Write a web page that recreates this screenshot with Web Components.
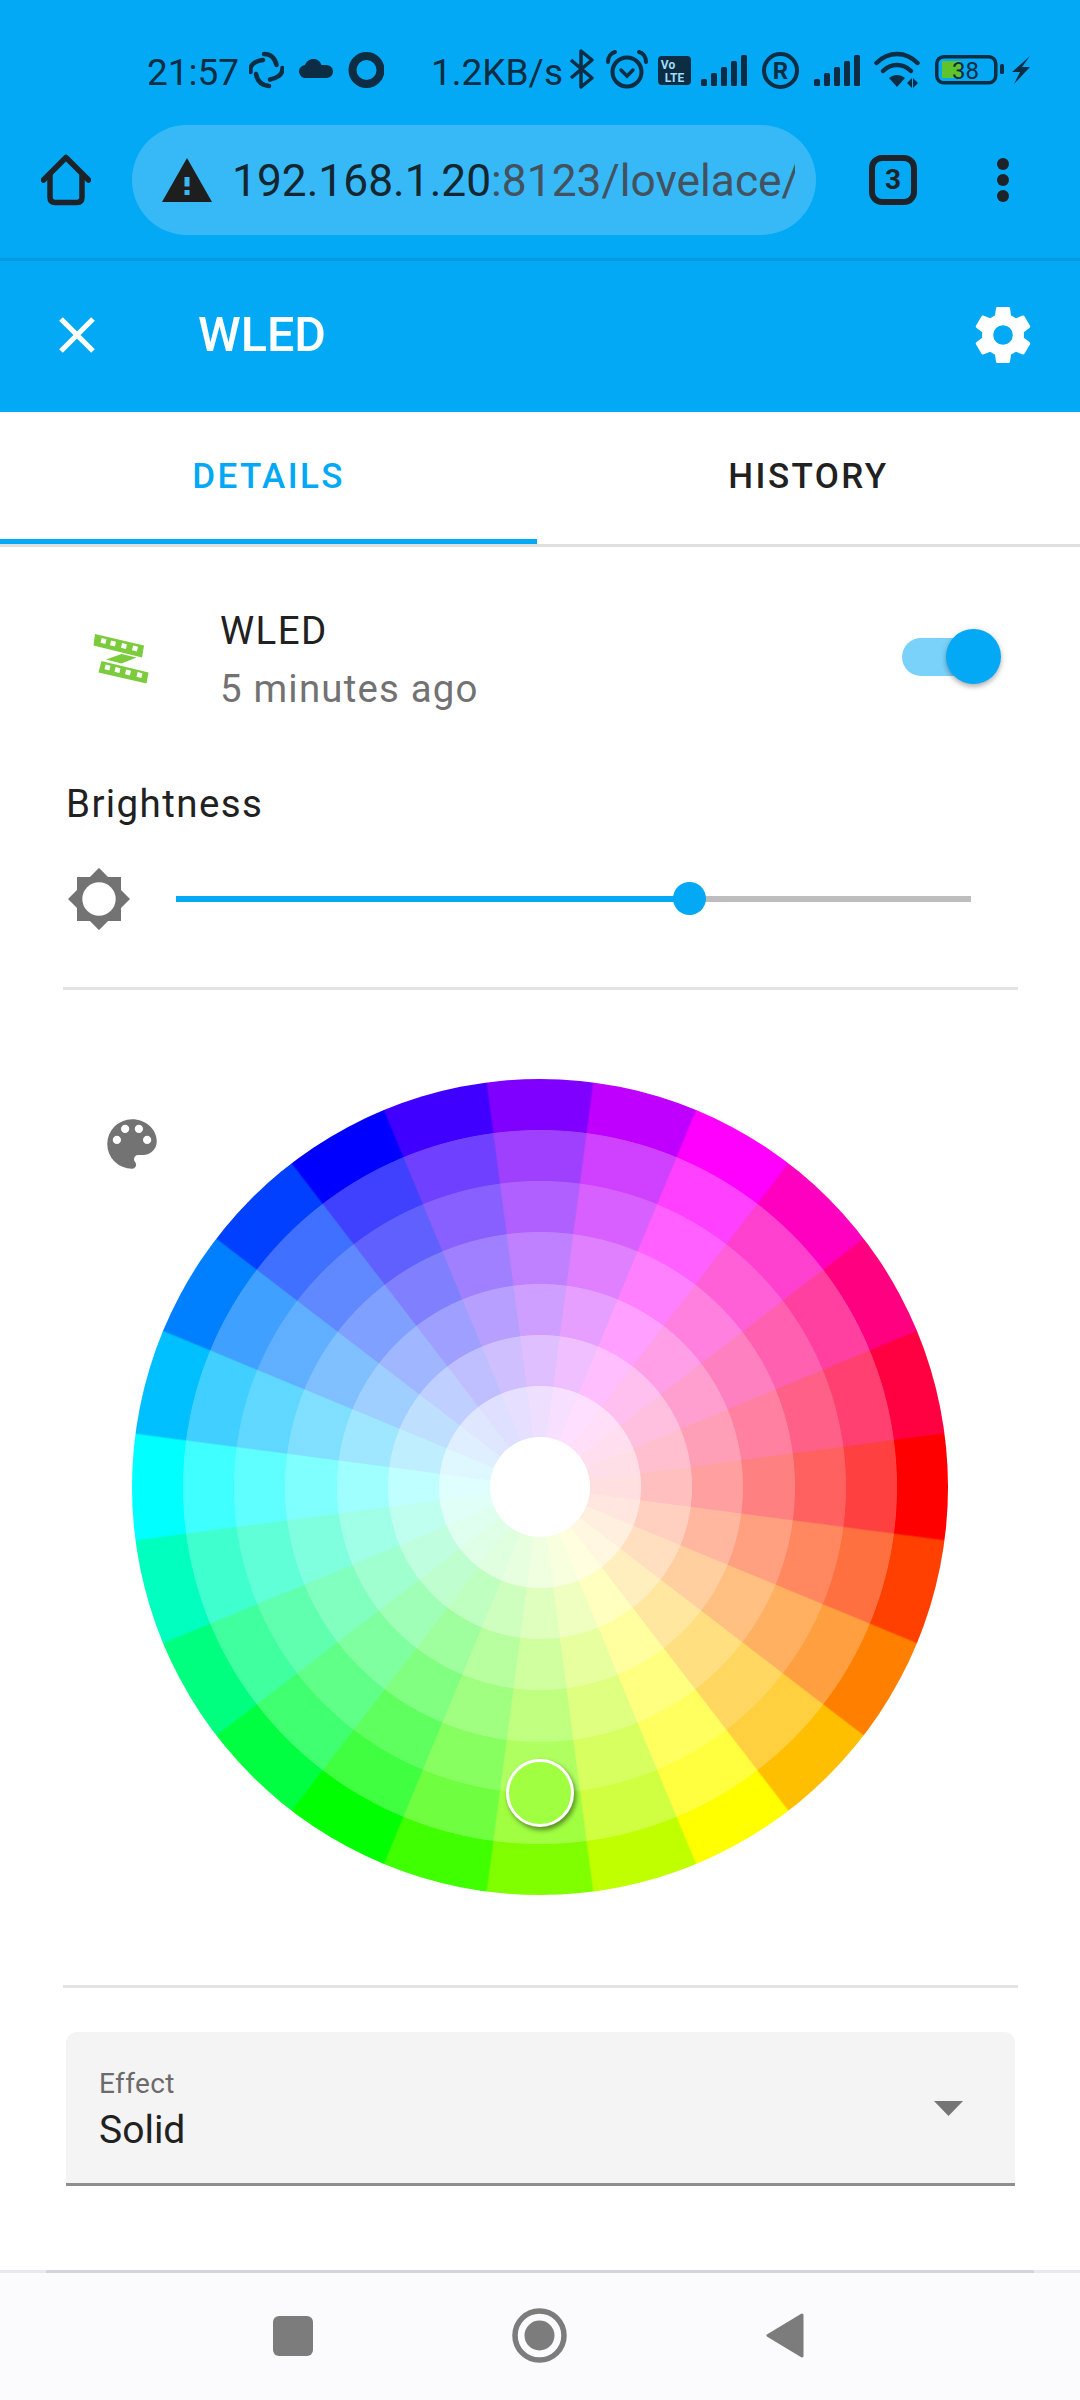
<!DOCTYPE html>
<html lang="en">
<head>
<meta charset="utf-8">
<title>WLED</title>
<style>
html,body{margin:0;padding:0;background:#fff}
body{width:1080px;height:2400px;overflow:hidden;font-family:Roboto,"Liberation Sans",sans-serif;color:#212121;display:flex;flex-direction:column}
</style>
</head>
<body>
<status-bar></status-bar>
<browser-bar></browser-bar>
<app-header>WLED</app-header>
<tab-bar><span slot="active">DETAILS</span><span slot="other">HISTORY</span></tab-bar>
<info-row><span slot="name">WLED</span><span slot="sub">5 minutes ago</span></info-row>
<brightness-row>Brightness</brightness-row>
<line-divider></line-divider>
<color-wheel></color-wheel>
<line-divider></line-divider>
<effect-select><span slot="label">Effect</span><span slot="value">Solid</span></effect-select>
<nav-bar></nav-bar>

<script>
function define(name, html) {
  customElements.define(name, class extends HTMLElement {
    constructor() {
      super();
      this.attachShadow({mode: 'open'}).innerHTML = typeof html === 'function' ? html() : html;
    }
  });
}
const D = '#0c2d44';
const ico = (x, w, body) => `<svg width="${w}" height="60" viewBox="${x} 40 ${w} 60" style="flex:none;display:block;margin-left:var(--m,0)">${body}</svg>`;
const sig = x => [0,1,2,3,4].map(i => {
  const h = 7 + i * 6;
  return `<rect x="${x + 1 + i * 10}" y="${86 - h}" width="6" height="${h}" rx="1.5" fill="${D}"/>`;
}).join('');

define('status-bar', () => `
<style>
:host{display:flex;flex:none;height:110px;box-sizing:border-box;padding:40px 0 10px 147px;background:#03a9f4;color:${D};font-size:37px;align-items:flex-start}
span{flex:none;display:flex}
.t{display:block;height:60px;line-height:65px;white-space:nowrap}
</style>
<span class="t" style="width:93px">21:57</span>
<span style="--m:9px">${ico(249,35,`<g fill="none" stroke="${D}" stroke-width="4.500" stroke-linecap="round"><path d="M264 54Q274 54 276.500 65"/><path d="M282.500 68Q283 77 270 79.500"/><path d="M269 86Q258 85 256 74"/><path d="M250.500 72Q249 62 263 60"/></g>`)}</span>
<span style="--m:15px">${ico(299,35,`<path d="M306 78a6.500 6.500 0 0 1-1-13c1.500-4 5-6.500 9-6 3.500 0 6 2.500 7.500 6h4.500a6.500 6.500 0 0 1 1 13z" fill="${D}"/>`)}</span>
<span style="--m:14px">${ico(348,36,`<circle cx="366.500" cy="70" r="14" fill="none" stroke="${D}" stroke-width="8"/>`)}</span>
<span class="t" style="margin-left:47px;width:138px">1.2KB/s</span>
<span>${ico(569,25,`<path d="M571 60 592 78 581 87V51L592 60 571 78" fill="none" stroke="${D}" stroke-width="3.500" stroke-linejoin="round"/>`)}</span>
<span style="--m:12px">${ico(606,42,`<g fill="none" stroke="${D}" stroke-width="4" stroke-linecap="round"><circle cx="627" cy="72" r="14.500"/><path d="M621 70l6 6 6-6" stroke-width="3.500"/><path d="M608 62c0-5 3-9 7-10M646 62c0-5-3-9-7-10"/></g>`)}</span>
<span style="--m:9px">${ico(657,35,`<rect x="658" y="56" width="33" height="29" rx="4" fill="${D}"/><text x="668" y="69" font-size="12" font-weight="700" fill="#9fdcf8" font-family="Roboto" text-anchor="middle">Vo</text><text x="674.500" y="82" font-size="12" font-weight="700" fill="#9fdcf8" font-family="Roboto" text-anchor="middle">LTE</text>`)}</span>
<span style="--m:8px">${ico(700,48,sig(700))}</span>
<span style="--m:14px">${ico(762,37,`<circle cx="780.500" cy="70.500" r="16.500" fill="none" stroke="${D}" stroke-width="4"/><text x="780.500" y="79" font-size="24" font-weight="700" fill="${D}" font-family="Roboto" text-anchor="middle">R</text>`)}</span>
<span style="--m:14px">${ico(813,48,sig(813))}</span>
<span style="--m:13px">${ico(874,46,`<g fill="none" stroke="${D}" stroke-width="4.500" stroke-linecap="round"><path d="M876.500 63c12-12 29-12 41 0"/><path d="M883 71c8-8 20-8 28 0"/></g><path d="M889 78c5-4 11-4 16 0l-8 9z" fill="${D}"/><path d="M907 83l5-5v10zM913 78l5 5-5 5z" fill="${D}"/>`)}</span>
<span style="--m:15px">${ico(935,70,`<rect x="942" y="61" width="19" height="17" fill="#5fc42c"/><rect x="936.750" y="56.750" width="59" height="26" rx="7" fill="none" stroke="${D}" stroke-width="3.500"/><rect x="1000" y="64" width="4" height="10" rx="1.500" fill="${D}"/><text x="965.500" y="79" font-size="24" fill="${D}" font-family="Roboto" text-anchor="middle">38</text>`)}</span>
<span style="--m:6px">${ico(1011,19,`<path d="M1030 56 1012 72H1020L1014 84 1030 67H1022Z" fill="${D}"/>`)}</span>
`);

define('browser-bar', `
<style>
:host{display:flex;flex:none;height:151px;box-sizing:border-box;padding:0 0 9px 0;background:#03a9f4;border-bottom:3px solid #0299de;align-items:center}
svg{flex:none;display:block}
.pill{flex:none;width:684px;height:110px;border-radius:55px;background:#38b9f7;margin-left:41px;display:flex;align-items:center;box-sizing:border-box;padding:0 21px 0 30px}
.url{margin-left:20px;width:563px;overflow:hidden;white-space:nowrap;font-size:44.300px;line-height:60px;padding-top:2px;color:#43525e}
.url b{font-weight:400;color:#14262f}
.tabs{flex:none;margin-left:53px;width:48px;height:50px;box-sizing:border-box;border:6px solid #1d2328;border-radius:13px;display:flex;align-items:center;justify-content:center;font-size:28px;font-weight:700;color:#1d2328}
.more{flex:none;margin-left:80px}
</style>
<svg style="margin-left:41px" width="50" height="52" viewBox="41 155 50 52"><g fill="none" stroke="#1d2328" stroke-width="5.500" stroke-linecap="round" stroke-linejoin="round"><path d="M43.500 181 66 158.500 88.500 181"/><path d="M50 175V198Q50 203.500 55 203.500H77Q82 203.500 82 198V175"/></g></svg>
<div class="pill">
  <svg width="50" height="44" viewBox="162 156 50 44"><path d="M187 156 212 200H162Z" fill="#1e1e1e"/><rect x="184.500" y="175" width="5" height="9.500" fill="#38b9f7"/><rect x="184.500" y="188" width="5" height="5" fill="#38b9f7"/></svg>
  <div class="url"><b>192.168.1.20</b>:8123/lovelace/</div>
</div>
<div class="tabs">3</div>
<svg class="more" width="12" height="44" viewBox="0 0 12 44"><circle cx="6" cy="6" r="6" fill="#1d2328"/><circle cx="6" cy="22" r="6" fill="#1d2328"/><circle cx="6" cy="38" r="6" fill="#1d2328"/></svg>
`);

define('app-header', `
<style>
:host{display:flex;flex:none;height:151px;box-sizing:border-box;padding:0 0 3px 0;background:#03a9f4;color:#fff;align-items:center}
svg{flex:none;display:block}
.t{flex:1;margin-left:102px;font-size:48.500px;font-weight:500;line-height:60px}
</style>
<svg style="margin-left:58px" width="38" height="38" viewBox="0 0 38 38"><path d="M3 3 35 35M35 3 3 35" stroke="#fff" stroke-width="5.200" fill="none"/></svg>
<div class="t"><slot></slot></div>
<svg style="margin-right:49px" width="56" height="56" viewBox="2 2 20 20"><path fill="#fff" d="M12,15.500A3.500,3.500 0 0,1 8.500,12A3.500,3.500 0 0,1 12,8.500A3.500,3.500 0 0,1 15.500,12A3.500,3.500 0 0,1 12,15.500M19.430,12.970C19.470,12.650 19.500,12.330 19.500,12C19.500,11.670 19.470,11.340 19.430,11L21.540,9.370C21.730,9.220 21.780,8.950 21.660,8.730L19.660,5.270C19.540,5.050 19.270,4.960 19.050,5.050L16.560,6.050C16.040,5.660 15.500,5.320 14.870,5.070L14.500,2.420C14.460,2.180 14.250,2 14,2H10C9.750,2 9.540,2.180 9.500,2.420L9.130,5.070C8.500,5.320 7.960,5.660 7.440,6.050L4.950,5.050C4.730,4.960 4.460,5.050 4.340,5.270L2.340,8.730C2.210,8.950 2.270,9.220 2.460,9.370L4.570,11C4.530,11.340 4.500,11.670 4.500,12C4.500,12.330 4.530,12.650 4.570,12.970L2.460,14.630C2.270,14.780 2.210,15.050 2.340,15.270L4.340,18.730C4.460,18.950 4.730,19.030 4.950,18.950L7.440,17.940C7.960,18.340 8.500,18.680 9.130,18.930L9.500,21.580C9.540,21.820 9.750,22 10,22H14C14.250,22 14.460,21.820 14.500,21.580L14.870,18.930C15.500,18.670 16.040,18.340 16.560,17.940L19.050,18.950C19.270,19.030 19.540,18.950 19.660,18.730L21.660,15.270C21.780,15.050 21.730,14.780 21.540,14.630L19.430,12.970Z"/></svg>
`);

define('tab-bar', `
<style>
:host{display:grid;flex:none;grid-template-columns:537px 1fr;height:135px;box-sizing:border-box;background:#fff;border-bottom:3px solid #e0e0e0;font-size:35px;font-weight:500;letter-spacing:2.400px;text-align:center}
div{display:flex;align-items:center;justify-content:center;box-sizing:border-box;height:132px;padding-top:2px;padding-bottom:6px}
.a{color:#03a9f4;border-bottom:5px solid #03a9f4;padding-bottom:1px}
.o{color:#212121}
</style>
<div class="a"><slot name="active"></slot></div>
<div class="o"><slot name="other"></slot></div>
`);

define('info-row', `
<style>
:host{display:flex;flex:none;box-sizing:border-box;height:221px;padding:58px 79px 57px 90px;align-items:center;background:#fff}
svg{flex:none;display:block}
.txt{flex:1;margin-left:70px;display:flex;flex-direction:column;padding-top:3px}
.n{font-size:38.500px;line-height:48px;height:48px;letter-spacing:1.400px;color:#212121}
.s{font-size:38.400px;line-height:48px;height:58px;padding-top:10px;box-sizing:border-box;letter-spacing:1.200px;color:#727272}
.toggle{flex:none;position:relative;width:99px;height:55px;margin-top:-3px}
.track{width:96px;height:38px;margin-top:9px;border-radius:19px;background:#7ad2fb}
.knob{position:absolute;right:0;top:0;width:55px;height:55px;border-radius:50%;background:#03a9f4;box-shadow:0 3px 4px rgba(0,0,0,.22),0 1px 8px rgba(0,0,0,.12)}
</style>
<svg width="60" height="60" viewBox="90 628 60 60">
  <g fill="#7ccb3c">
    <path d="M95 634 144 645.500 142 657.500 93.500 645.500Z"/>
    <path d="M101.500 661 148.500 672.500 146.500 683.500 98.500 672.500Z"/>
    <path d="M106 659.500 121.500 654 136.500 657.500 121.500 663.500Z"/>
  </g>
  <g fill="#fff">
    <rect x="101" y="638.500" width="5" height="5" transform="rotate(13 103.500 641)"/>
    <rect x="110.500" y="641" width="5" height="5" transform="rotate(13 113 643.500)"/>
    <rect x="121.500" y="643.500" width="5" height="5" transform="rotate(13 124 646)"/>
    <rect x="132.500" y="646" width="5" height="5" transform="rotate(13 135 648.500)"/>
    <rect x="105" y="665" width="5" height="5" transform="rotate(13 107.500 667.500)"/>
    <rect x="115" y="667.500" width="5" height="5" transform="rotate(13 117.500 670)"/>
    <rect x="125.500" y="670" width="5" height="5" transform="rotate(13 128 672.500)"/>
    <rect x="137" y="672.500" width="5" height="5" transform="rotate(13 139.500 675)"/>
  </g>
</svg>
<div class="txt"><div class="n"><slot name="name"></slot></div><div class="s"><slot name="sub"></slot></div></div>
<div class="toggle"><div class="track"></div><div class="knob"></div></div>
`);

define('brightness-row', `
<style>
:host{display:block;flex:none;height:219px;box-sizing:border-box;background:#fff;padding:12px 0 0 66px}
.l{font-size:38.500px;line-height:48px;letter-spacing:1.400px;color:#212121}
.r{display:flex;align-items:center;height:64px;margin-top:39px}
svg{flex:none;display:block;margin-left:2px}
.slider{flex:none;position:relative;margin-left:46px;width:795px;height:6px;background:#bdbdbd}
.fill{width:514px;height:6px;background:#03a9f4}
.th{position:absolute;left:497px;top:-14px;width:33px;height:33px;border-radius:50%;background:#03a9f4}
</style>
<div class="l"><slot></slot></div>
<div class="r">
  <svg width="62" height="62" viewBox="0 0 62 62"><g fill="#737373"><rect x="9" y="9" width="44" height="44"/><rect x="9" y="9" width="44" height="44" transform="rotate(45 31 31)"/></g><circle cx="31" cy="31" r="16.700" fill="#fff"/></svg>
  <div class="slider"><div class="fill"></div><div class="th"></div></div>
</div>
`);

define('line-divider', `
<style>:host{display:block;flex:none;height:3px;margin:0 62px 0 63px;background:#e3e3e3}</style>
`);

define('color-wheel', () => {
  const stops = [];
  for (let i = 0; i < 24; i++) {
    const h = i * 15, c = `hsl(${h},100%,50%)`;
    stops.push(`${c} ${i * 15 + .15}deg ${(i + 1) * 15 - .15}deg`);
  }
  stops.push(`hsl(0,100%,50%) 360deg`);
  const alpha = [1, .875, .75, .625, .5, .375, .25, 0];
  const rad = [50, 101, 152, 203, 255, 306, 357, 408];
  const rs = [];
  rad.forEach((r, i) => {
    const c = `rgba(255,255,255,${alpha[i]})`;
    rs.push(`${c} ${i ? rad[i - 1] + .4 : 0}px ${r - .4}px`);
  });
  return `
<style>
:host{display:block;flex:none;position:relative;height:995px;box-sizing:border-box;padding:89px 0 0 132px;background:#fff}
.w{position:relative;width:816px;height:816px;border-radius:50%;background:radial-gradient(circle 408px at center,${rs.join(',')}),conic-gradient(from 82.5deg,${stops.join(',')})}
.h{position:absolute;left:374px;top:680px;width:68px;height:68px;box-sizing:border-box;border:3.500px solid #fff;border-radius:50%;background:#a0ff40;box-shadow:2px 3px 5px rgba(0,0,0,.45)}
.p{position:absolute;left:99px;top:121px;display:block}
</style>
<svg class="p" width="66" height="66" viewBox="0 0 24 24"><path fill="#737373" d="M17.500,12A1.500,1.500 0 0,1 16,10.500A1.500,1.500 0 0,1 17.500,9A1.500,1.500 0 0,1 19,10.500A1.500,1.500 0 0,1 17.500,12M14.500,8A1.500,1.500 0 0,1 13,6.500A1.500,1.500 0 0,1 14.500,5A1.500,1.500 0 0,1 16,6.500A1.500,1.500 0 0,1 14.500,8M9.500,8A1.500,1.500 0 0,1 8,6.500A1.500,1.500 0 0,1 9.500,5A1.500,1.500 0 0,1 11,6.500A1.500,1.500 0 0,1 9.500,8M6.500,12A1.500,1.500 0 0,1 5,10.500A1.500,1.500 0 0,1 6.500,9A1.500,1.500 0 0,1 8,10.500A1.500,1.500 0 0,1 6.500,12M12,3A9,9 0 0,0 3,12A9,9 0 0,0 12,21A1.500,1.500 0 0,0 13.500,19.500C13.500,19.110 13.350,18.760 13.110,18.500C12.880,18.230 12.730,17.880 12.730,17.500A1.500,1.500 0 0,1 14.230,16H16A5,5 0 0,0 21,11C21,6.580 16.970,3 12,3Z"/></svg>
<div class="w"><div class="h"></div></div>`;
});

define('effect-select', `
<style>
:host{display:block;flex:none;height:282px;box-sizing:border-box;padding:44px 65px 0 66px;background:#fff}
.box{height:154px;box-sizing:border-box;background:#f4f4f4;border-bottom:3px solid #8e8e8e;border-radius:11px 11px 0 0;padding:34px 52px 0 33px;display:flex;align-items:center}
.c{flex:1;display:flex;flex-direction:column;align-self:flex-start}
.l{font-size:28px;line-height:36px;letter-spacing:.4px;color:#6b6b6b}
.v{font-size:39px;line-height:50px;margin-top:3px;color:#212121}
svg{flex:none;display:block;margin-top:-33px}
</style>
<div class="box">
  <div class="c"><div class="l"><slot name="label"></slot></div><div class="v"><slot name="value"></slot></div></div>
  <svg width="29" height="15" viewBox="0 0 29 15"><path d="M0 0H29L14.500 15Z" fill="#757575"/></svg>
</div>
`);

define('nav-bar', `
<style>
:host{display:flex;flex:auto;box-sizing:border-box;background:#fbfbfe;border-top:3px solid;border-image:linear-gradient(90deg,#e8e8f0 47px,#d4d4da 47px,#d4d4da 1033px,#e8e8f0 1033px) 1;align-items:center;padding:0 0 2px 273px}
svg{flex:none;display:block}
</style>
<svg width="40" height="40" viewBox="0 0 40 40"><rect width="40" height="40" rx="6" fill="#7c7c7c"/></svg>
<svg style="margin-left:199px" width="55" height="55" viewBox="0 0 55 55"><circle cx="27.500" cy="27.500" r="24.500" fill="none" stroke="#7c7c7c" stroke-width="5.500"/><circle cx="27.500" cy="27.500" r="15" fill="#7c7c7c"/></svg>
<svg style="margin-left:199px" width="38" height="47" viewBox="0 0 38 47"><path d="M36 3 2 23.500 36 44Z" fill="#7c7c7c" stroke="#7c7c7c" stroke-width="3" stroke-linejoin="round"/></svg>
`);
</script>
</body>
</html>
